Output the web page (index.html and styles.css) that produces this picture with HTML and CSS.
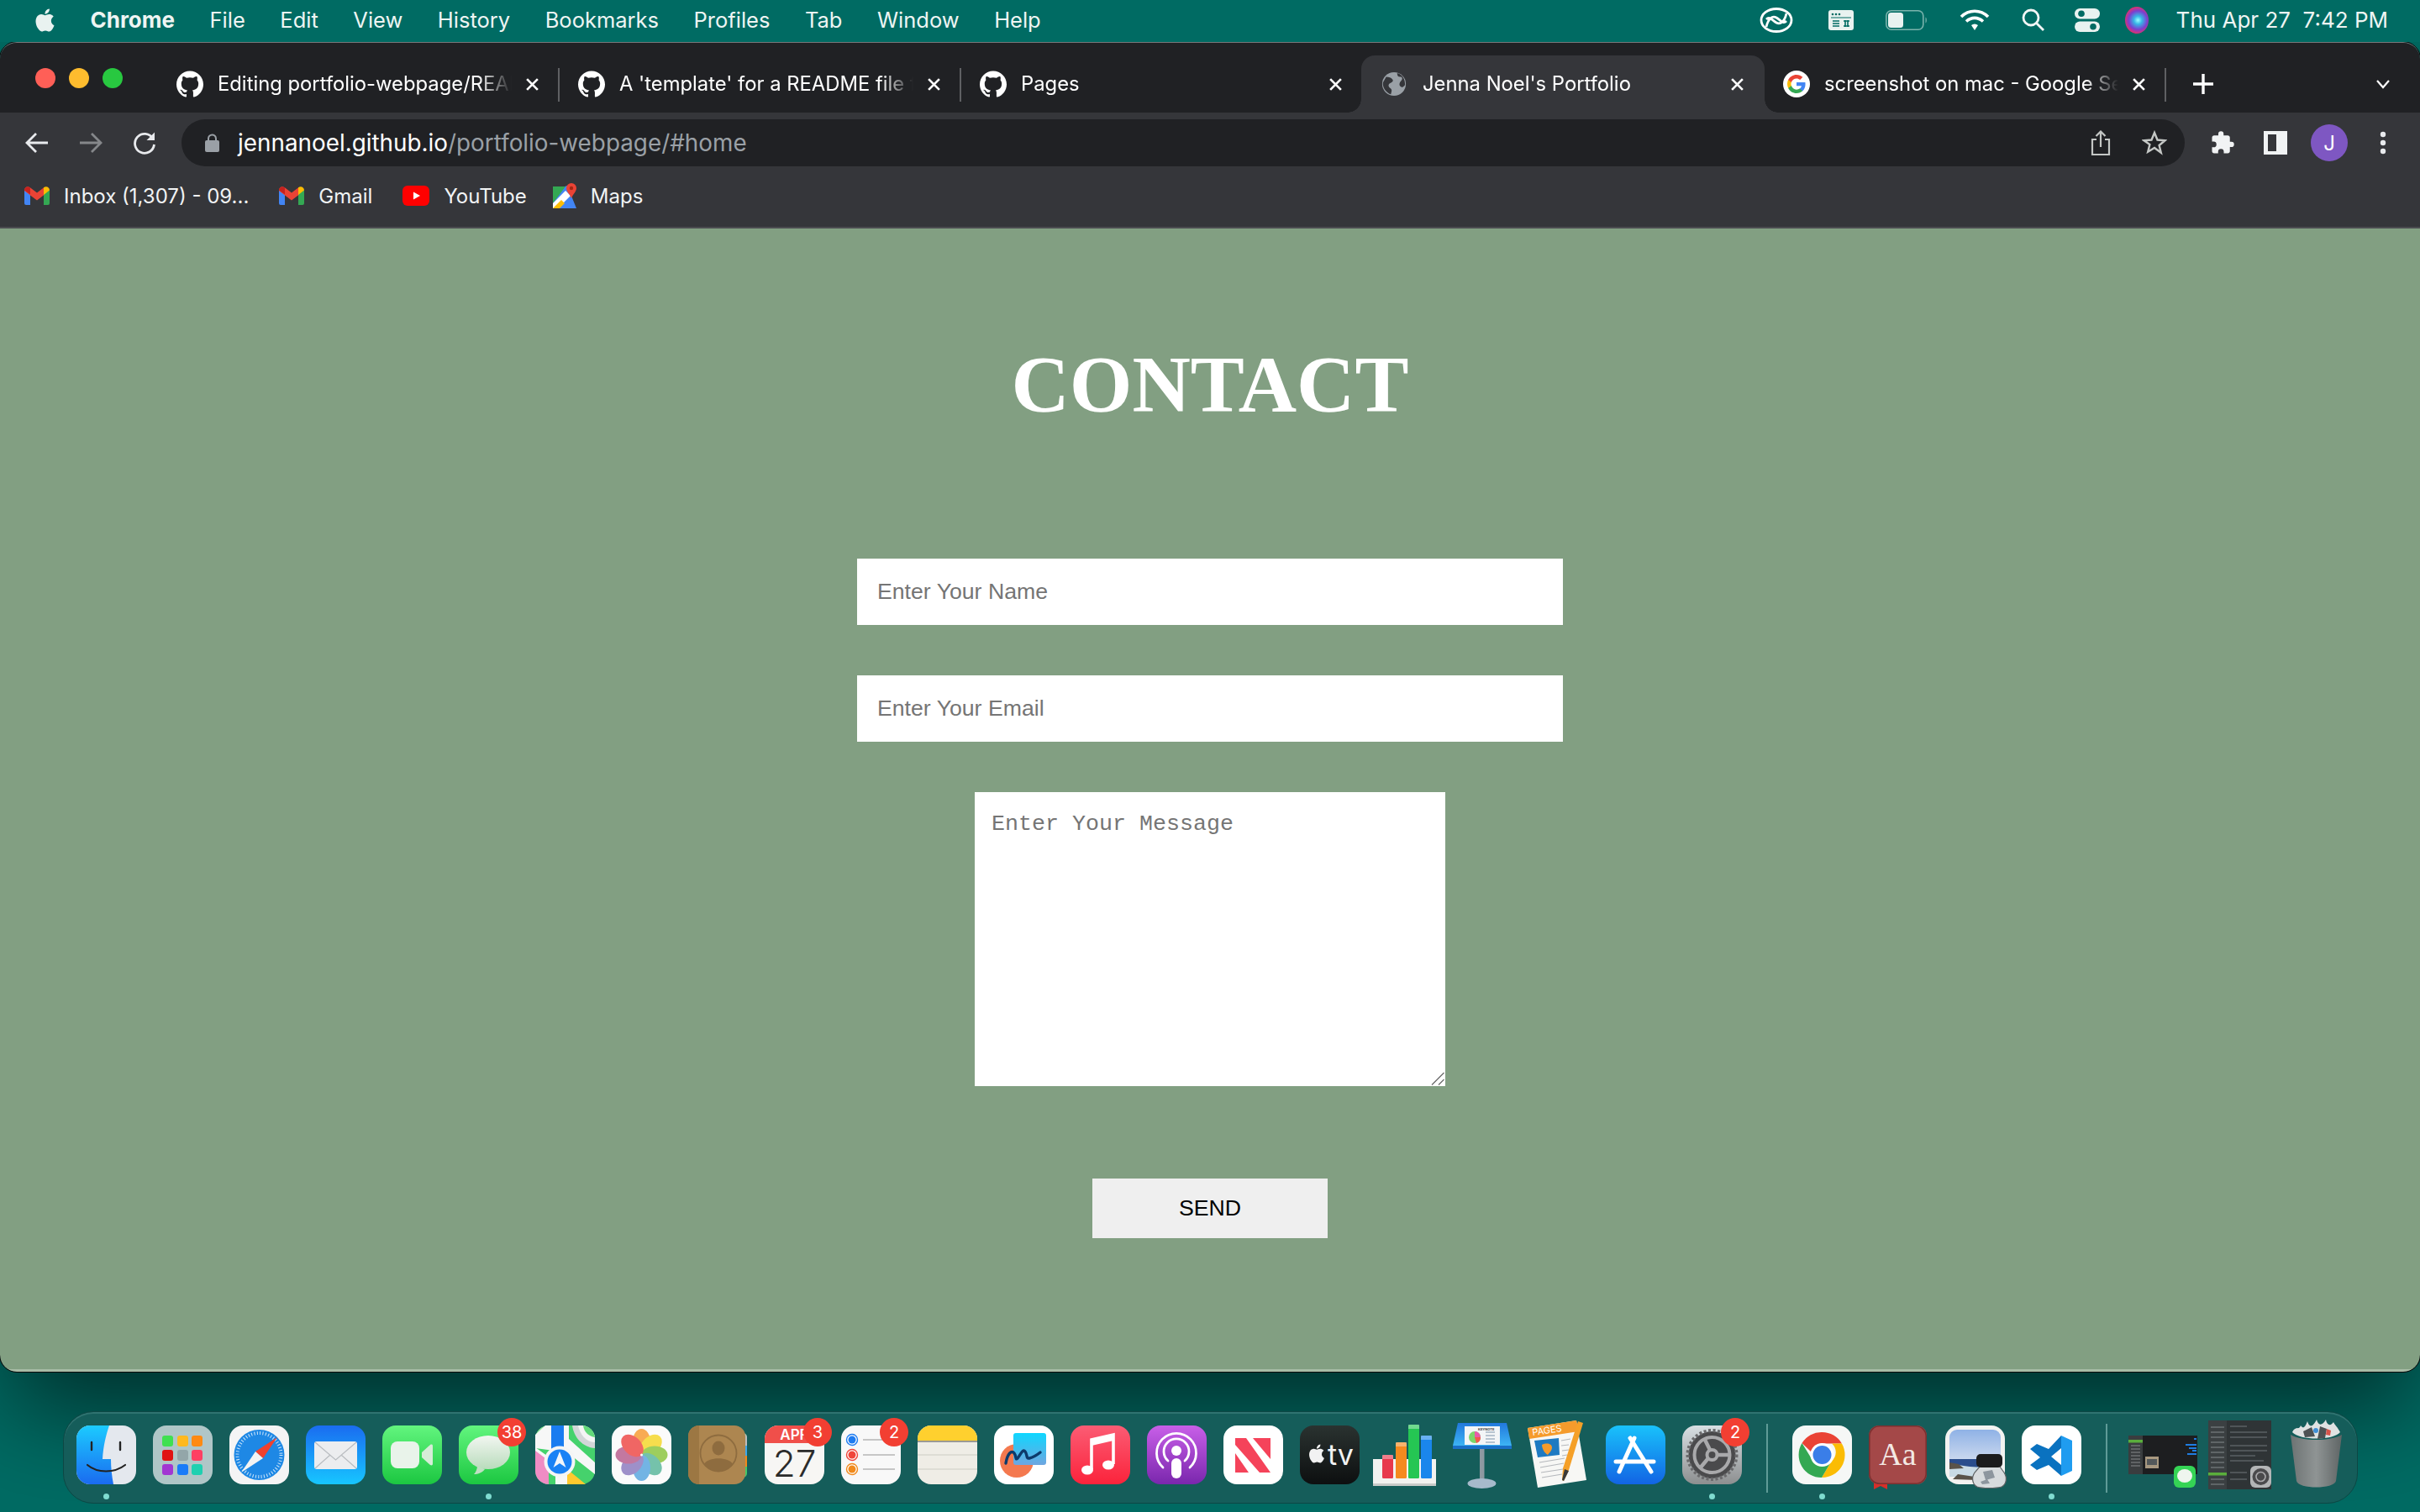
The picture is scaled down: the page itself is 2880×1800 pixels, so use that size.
FILE: index.html
```html
<!DOCTYPE html>
<html lang="en">
<head>
    <meta charset="UTF-8">
    <title>Jenna Noel's Portfolio</title>
    <link rel="stylesheet" href="styles.css">
</head>

<body>

    <!-- Shared icons and gradients -->
    <svg class="svg-defs" aria-hidden="true">
        <defs>
            <linearGradient id="g-mail" x1="0" y1="0" x2="0" y2="1"><stop offset="0" stop-color="#1a6cf0"/><stop offset="1" stop-color="#17c6ff"/></linearGradient>
            <linearGradient id="g-green" x1="0" y1="0" x2="0" y2="1"><stop offset="0" stop-color="#62f57e"/><stop offset="1" stop-color="#1cc741"/></linearGradient>
            <linearGradient id="g-bubble" x1="0" y1="0" x2="0" y2="1"><stop offset="0" stop-color="#f2f6f1"/><stop offset="1" stop-color="#b9dcbc"/></linearGradient>
            <linearGradient id="g-music" x1="0" y1="0" x2="0" y2="1"><stop offset="0" stop-color="#fb5c74"/><stop offset="1" stop-color="#fb233b"/></linearGradient>
            <linearGradient id="g-pod" x1="0" y1="0" x2="0" y2="1"><stop offset="0" stop-color="#c85fe8"/><stop offset="1" stop-color="#7a27ad"/></linearGradient>
            <linearGradient id="g-tv" x1="0" y1="0" x2="0" y2="1"><stop offset="0" stop-color="#2a3230"/><stop offset="1" stop-color="#0d0f10"/></linearGradient>
            <linearGradient id="g-store" x1="0" y1="0" x2="0" y2="1"><stop offset="0" stop-color="#19c2fb"/><stop offset="1" stop-color="#1264e4"/></linearGradient>
            <linearGradient id="g-gear" x1="0" y1="0" x2="0" y2="1"><stop offset="0" stop-color="#d8dfe3"/><stop offset="1" stop-color="#8d8f90"/></linearGradient>
            <linearGradient id="g-finder" x1="0" y1="0" x2="0" y2="1"><stop offset="0" stop-color="#1ccbff"/><stop offset="1" stop-color="#1a6bf0"/></linearGradient>
            <linearGradient id="g-trash" x1="0" y1="0" x2="1" y2="0"><stop offset="0" stop-color="#6d7373"/><stop offset=".5" stop-color="#8f9494"/><stop offset="1" stop-color="#5f6565"/></linearGradient>
            <linearGradient id="g-sheet" x1="0" y1="0" x2="0" y2="1"><stop offset="0" stop-color="#0fd7ff"/><stop offset="1" stop-color="#6fa6e0"/></linearGradient>
            <linearGradient id="g-sky" x1="0" y1="0" x2="0" y2="1"><stop offset="0" stop-color="#8fb2e6"/><stop offset="1" stop-color="#c9d7ee"/></linearGradient>
            <linearGradient id="g-stage" x1="0" y1="0" x2="0" y2="1"><stop offset="0" stop-color="#2278dc"/><stop offset="1" stop-color="#3db4f5"/></linearGradient>

            <symbol id="i-apple" viewBox="0 0 24 24"><path d="M12.152 6.896c-.948 0-2.415-1.078-3.96-1.04-2.04.027-3.91 1.183-4.961 3.014-2.117 3.675-.546 9.103 1.519 12.09 1.013 1.454 2.208 3.09 3.792 3.039 1.52-.065 2.09-.987 3.935-.987 1.831 0 2.35.987 3.96.948 1.637-.026 2.676-1.48 3.676-2.948 1.156-1.688 1.636-3.325 1.662-3.415-.039-.013-3.182-1.221-3.22-4.857-.026-3.04 2.48-4.494 2.597-4.559-1.429-2.09-3.623-2.324-4.39-2.376-2-.156-3.675 1.09-4.61 1.09zM15.53 3.83c.843-1.012 1.4-2.427 1.245-3.83-1.207.052-2.662.805-3.532 1.818-.78.896-1.454 2.338-1.273 3.714 1.338.104 2.715-.688 3.559-1.701"/></symbol>
            <symbol id="i-github" viewBox="0 0 24 24"><path fill="#fff" d="M12 .297c-6.63 0-12 5.373-12 12 0 5.303 3.438 9.8 8.205 11.385.6.113.82-.258.82-.577 0-.285-.01-1.04-.015-2.04-3.338.724-4.042-1.61-4.042-1.61C4.422 18.07 3.633 17.7 3.633 17.7c-1.087-.744.084-.729.084-.729 1.205.084 1.838 1.236 1.838 1.236 1.07 1.835 2.809 1.305 3.495.998.108-.776.417-1.305.76-1.605-2.665-.3-5.466-1.332-5.466-5.93 0-1.31.465-2.38 1.235-3.22-.135-.303-.54-1.523.105-3.176 0 0 1.005-.322 3.3 1.23.96-.267 1.98-.399 3-.405 1.02.006 2.04.138 3 .405 2.28-1.552 3.285-1.23 3.285-1.23.645 1.653.24 2.873.12 3.176.765.84 1.23 1.91 1.23 3.22 0 4.61-2.805 5.625-5.475 5.92.42.36.81 1.096.81 2.22 0 1.606-.015 2.896-.03 3.286 0 .315.21.69.825.57C20.565 22.092 24 17.592 24 12.297c0-6.627-5.373-12-12-12"/></symbol>
            <symbol id="i-gmail" viewBox="0 0 30 22">
                <path fill="#4285f4" d="M0 4v16a2 2 0 0 0 2 2h5V9z"/>
                <path fill="#34a853" d="M30 4v16a2 2 0 0 1-2 2h-5V9z"/>
                <path fill="#ea4335" d="M0 4.500C0 1 3.500-1 6.500 1L15 7.500 23.500 1v9L15 16.500 7 10.500 0 5z"/>
                <path fill="#fbbc04" d="M23 1.300C26-1 30 1 30 4.500L23 10z"/>
                <path fill="#c5221f" d="M0 4.500 7 9.500V1.600C4-1 0 1 0 4.500z"/>
            </symbol>
            <symbol id="i-close" viewBox="0 0 16 16"><path d="M2 2l12 12M14 2 2 14" stroke="#fff" stroke-width="2.500" fill="none"/></symbol>
        </defs>
    </svg>

    <!-- Menu bar -->
    <header class="menu-bar">
        <nav class="menu-left">
            <svg class="apple-logo"><use href="#i-apple" fill="#e9f2f0"/></svg>
            <span class="menu-app">Chrome</span>
            <span>File</span>
            <span>Edit</span>
            <span>View</span>
            <span>History</span>
            <span>Bookmarks</span>
            <span>Profiles</span>
            <span>Tab</span>
            <span>Window</span>
            <span>Help</span>
        </nav>
        <div class="menu-right">
            <svg class="status-icon" width="40" height="30" viewBox="0 0 40 30" fill="none" stroke="#fff" stroke-width="2.800">
                <ellipse cx="20" cy="15" rx="18" ry="13.500"/>
                <path d="M8 23c2-9 7-14 12-11s8 8 12 4M32 7c-2 9-7 14-12 11S12 10 8 14"/>
            </svg>
            <svg class="status-icon status-input" width="30" height="24" viewBox="0 0 30 24">
                <rect width="30" height="24" rx="3" fill="#e9f2f0"/>
                <path d="M3 9h24" stroke="#006b63" stroke-width="1"/>
                <path d="M5 13h8M5 16h8M5 19h8M18 13h7M18 19h7M20 12v8M23 12v8" stroke="#006b63" stroke-width="1.600"/>
                <circle cx="5" cy="5" r="1.300" fill="#006b63"/><circle cx="9" cy="5" r="1.300" fill="#006b63"/><circle cx="13" cy="5" r="1.300" fill="#006b63"/>
            </svg>
            <svg class="status-icon" width="50" height="24" viewBox="0 0 50 24">
                <rect x=".8" y=".8" width="44" height="22.400" rx="6" fill="none" stroke="#7ab3ac" stroke-width="1.600"/>
                <rect x="3" y="3" width="18" height="18" rx="3.500" fill="#e9f2f0"/>
                <path d="M47.500 8.500c1.800.8 1.800 6.200 0 7z" fill="#7ab3ac"/>
            </svg>
            <svg class="status-icon" width="36" height="26" viewBox="0 0 36 26" fill="none" stroke="#fff" stroke-width="3.600">
                <path d="M2 9c9-9 23-9 32 0M8 14.500c6-5.500 14-5.500 20 0"/>
                <path d="M14 19c2.500-2 5.500-2 8 0l-4 6z" fill="#fff" stroke="none"/>
            </svg>
            <svg class="status-icon" width="28" height="28" viewBox="0 0 28 28" fill="none" stroke="#f1f6f5" stroke-width="2.800">
                <circle cx="11" cy="11" r="9"/><path d="M17.500 17.500 26 26"/>
            </svg>
            <svg class="status-icon status-control" width="30" height="28" viewBox="0 0 30 28">
                <rect width="30" height="12.500" rx="6.250" fill="#e9f2f0"/>
                <circle cx="8" cy="6.250" r="3.800" fill="#006b63"/>
                <rect y="15.500" width="30" height="12.500" rx="6.250" fill="#e9f2f0"/>
                <circle cx="22" cy="21.750" r="3.800" fill="#006b63"/>
            </svg>
            <span class="siri"></span>
            <span class="menu-clock">Thu Apr 27&nbsp; 7:42 PM</span>
        </div>
    </header>

    <!-- Browser window -->
    <div class="window">
        <div class="tab-strip">
            <div class="traffic-lights">
                <span class="light light-red"></span>
                <span class="light light-yellow"></span>
                <span class="light light-green"></span>
            </div>
            <div class="tab tab-sep">
                <svg class="favicon"><use href="#i-github"/></svg>
                <span class="tab-title">Editing portfolio-webpage/README.md</span>
                <svg class="tab-close"><use href="#i-close"/></svg>
            </div>
            <div class="tab tab-sep">
                <svg class="favicon"><use href="#i-github"/></svg>
                <span class="tab-title">A 'template' for a README file for</span>
                <svg class="tab-close"><use href="#i-close"/></svg>
            </div>
            <div class="tab">
                <svg class="favicon"><use href="#i-github"/></svg>
                <span class="tab-title">Pages</span>
                <svg class="tab-close"><use href="#i-close"/></svg>
            </div>
            <div class="tab tab-active">
                <svg class="favicon" viewBox="0 0 32 32">
                    <circle cx="16" cy="16" r="15" fill="#9aa0a6"/>
                    <path d="M6 7c4 0 6 1 8 3s-1 4-3 5-3 4 0 6 2 4 1 8C6 27 1 20 2 14zM20 2c0 3 1 5 4 5s3 3 1 5-3 5-1 7 4 1 6-2c0-7-3-13-10-15z" fill="#35363a"/>
                </svg>
                <span class="tab-title">Jenna Noel's Portfolio</span>
                <svg class="tab-close"><use href="#i-close"/></svg>
            </div>
            <div class="tab tab-sep">
                <svg class="favicon" viewBox="0 0 32 32">
                    <circle cx="16" cy="16" r="16" fill="#fff"/>
                    <g transform="translate(4 4)">
                        <path fill="#4285f4" d="M22.560 12.250c0-.78-.07-1.530-.2-2.250H12v4.260h5.920c-.26 1.370-1.040 2.530-2.210 3.310v2.770h3.570c2.080-1.920 3.280-4.740 3.280-8.090z"/>
                        <path fill="#34a853" d="M12 23c2.970 0 5.460-.98 7.280-2.660l-3.570-2.770c-.98.66-2.230 1.060-3.710 1.060-2.860 0-5.290-1.930-6.160-4.530H2.180v2.840C3.990 20.530 7.700 23 12 23z"/>
                        <path fill="#fbbc05" d="M5.840 14.090c-.22-.66-.35-1.360-.35-2.090s.13-1.430.35-2.090V7.070H2.180C1.430 8.550 1 10.220 1 12s.43 3.450 1.180 4.930l2.850-2.220.81-.62z"/>
                        <path fill="#ea4335" d="M12 5.380c1.620 0 3.060.56 4.210 1.640l3.150-3.150C17.450 2.090 14.970 1 12 1 7.700 1 3.990 3.470 2.180 7.070l3.660 2.840c.87-2.600 3.300-4.530 6.160-4.530z"/>
                    </g>
                </svg>
                <span class="tab-title">screenshot on mac - Google Search</span>
                <svg class="tab-close"><use href="#i-close"/></svg>
            </div>
            <svg class="new-tab" width="26" height="26" viewBox="0 0 26 26"><path d="M13 1v24M1 13h24" stroke="#fff" stroke-width="3.400"/></svg>
            <svg class="tab-menu" width="18" height="12" viewBox="0 0 18 12"><path d="M2 2l7 8 7-8" fill="none" stroke="#fff" stroke-width="2.200"/></svg>
        </div>

        <div class="toolbar">
            <svg class="nav-icon" width="28" height="26" viewBox="0 0 28 26" fill="none" stroke="#e8eaed" stroke-width="2.800"><path d="M27 13H3M13 2 2 13l11 11"/></svg>
            <svg class="nav-icon" width="28" height="26" viewBox="0 0 28 26" fill="none" stroke="#85878a" stroke-width="2.800"><path d="M1 13h24M15 2l11 11-11 11"/></svg>
            <svg class="nav-icon" width="28" height="28" viewBox="0 0 28 28" fill="none" stroke="#e8eaed" stroke-width="2.800"><path d="M24 9A11.500 11.500 0 1 0 25.500 16"/><path d="M26 1.500V11H16.500z" fill="#e8eaed" stroke="none"/></svg>
            <div class="omnibox">
                <svg class="lock" width="17" height="22" viewBox="0 0 17 22"><path d="M4 9V6a4.500 4.500 0 0 1 9 0v3" fill="none" stroke="#9aa0a6" stroke-width="2"/><rect y="8" width="17" height="14" rx="2" fill="#9aa0a6"/></svg>
                <span class="url"><span class="url-host">jennanoel.github.io</span>/portfolio-webpage/#home</span>
                <svg class="omni-icon" width="24" height="30" viewBox="0 0 24 30" fill="none" stroke="#c4c7c5" stroke-width="2.200"><path d="M7 11H2v18h20V11h-5M12 20V2M6.500 7 12 1.500 17.500 7"/></svg>
                <svg class="omni-icon" width="30" height="30" viewBox="0 0 30 30" fill="none" stroke="#c4c7c5" stroke-width="2.400"><path d="M15 3l3.500 8.500 9 .7-6.900 5.800 2.200 8.800L15 21l-7.800 4.800 2.200-8.800L2.500 12.200l9-.7z"/></svg>
            </div>
            <div class="toolbar-actions">
                <svg width="30" height="30" viewBox="0 0 24 24"><path fill="#f1f3f4" d="M20.500 11H19V7c0-1.100-.9-2-2-2h-4V3.500a2.500 2.500 0 0 0-5 0V5H4c-1.100 0-2 .9-2 2v3.800h1.500a2.700 2.700 0 0 1 0 5.400H2V20c0 1.100.9 2 2 2h3.800v-1.500a2.700 2.700 0 0 1 5.400 0V22H17c1.100 0 2-.9 2-2v-4h1.500a2.500 2.500 0 0 0 0-5z"/></svg>
                <svg width="28" height="28" viewBox="0 0 28 28"><rect width="28" height="28" fill="#f1f3f4"/><rect x="5" y="4" width="10" height="20" fill="#35363a"/></svg>
                <span class="avatar">J</span>
                <svg width="8" height="28" viewBox="0 0 8 28" fill="#e8eaed"><circle cx="4" cy="4" r="3.200"/><circle cx="4" cy="14" r="3.200"/><circle cx="4" cy="24" r="3.200"/></svg>
            </div>
        </div>

        <div class="bookmarks">
            <div class="bookmark">
                <svg width="30" height="22"><use href="#i-gmail"/></svg>
                <span>Inbox (1,307) - 09...</span>
            </div>
            <div class="bookmark">
                <svg width="30" height="22"><use href="#i-gmail"/></svg>
                <span>Gmail</span>
            </div>
            <div class="bookmark">
                <svg width="32" height="24" viewBox="0 0 32 24"><rect width="32" height="24" rx="6" fill="#f00"/><path d="M13 7.500 21 12l-8 4.500z" fill="#fff"/></svg>
                <span>YouTube</span>
            </div>
            <div class="bookmark">
                <svg width="28" height="30" viewBox="0 0 28 30">
                    <path d="M0 9 17 3l11 27H0z" fill="#4285f4"/>
                    <path d="M0 4h15L0 24z" fill="#34a853"/>
                    <path d="M0 24 15 9l6 6L6 30H0z" fill="#fff"/>
                    <path d="M0 30 10 20l4 4-6 6z" fill="#fbbc04"/>
                    <path d="M22 0a6 6 0 0 1 6 6c0 4-4 7-6 12-2-5-6-8-6-12a6 6 0 0 1 6-6z" fill="#ea4335"/>
                    <circle cx="22" cy="6" r="2.200" fill="#a52714"/>
                </svg>
                <span>Maps</span>
            </div>
        </div>

        <!-- Contact section of the page -->
        <main class="page">
            <h1>CONTACT</h1>
            <form class="contact-form">
                <input type="text" placeholder="Enter Your Name">
                <input type="email" placeholder="Enter Your Email">
                <div class="message-box">
                    <textarea placeholder="Enter Your Message"></textarea>
                    <svg class="resize-grip" width="16" height="16" viewBox="0 0 16 16" fill="none" stroke="#6b6b6b" stroke-width="1.300"><path d="M1 15.500 15.500 1M9 15.500l6.500-6.500"/></svg>
                </div>
                <button type="button">SEND</button>
            </form>
        </main>
    </div>

    <!-- Dock -->
    <footer class="dock">
        <div class="dock-item has-dot">
            <svg viewBox="0 0 71 70">
                <rect width="71" height="70" rx="16" fill="#e4e8ee"/>
                <path d="M16 0h23c-4 12-7 24-8 40h10c0 10 1 20 3 30H16A16 16 0 0 1 0 54V16A16 16 0 0 1 16 0z" fill="url(#g-finder)"/>
                <path d="M18 20v9M52 20v9" stroke="#222" stroke-width="2.400" stroke-linecap="round"/>
                <path d="M13 47c12 10 32 10 45 0" stroke="#222" stroke-width="2.200" fill="none" stroke-linecap="round"/>
            </svg>
        </div>
        <div class="dock-item">
            <svg viewBox="0 0 71 70">
                <rect width="71" height="70" rx="16" fill="#b0c6c7"/>
                <rect x="11" y="12" width="13" height="13" rx="3" fill="#3fe050"/><rect x="29" y="12" width="13" height="13" rx="3" fill="#ffb91f"/><rect x="46" y="12" width="13" height="13" rx="3" fill="#ff8a12"/>
                <rect x="11" y="29" width="13" height="13" rx="3" fill="#e01212"/><rect x="29" y="29" width="13" height="13" rx="3" fill="#93a6a9"/><rect x="46" y="29" width="13" height="13" rx="3" fill="#ff3f63"/>
                <rect x="11" y="46" width="13" height="13" rx="3" fill="#a236d2"/><rect x="29" y="46" width="13" height="13" rx="3" fill="#1a7cf8"/><rect x="46" y="46" width="13" height="13" rx="3" fill="#1fd0b0"/>
            </svg>
        </div>
        <div class="dock-item">
            <svg viewBox="0 0 71 70">
                <rect width="71" height="70" rx="16" fill="#f4f4f5"/>
                <circle cx="35.500" cy="35" r="30" fill="#1e88e5"/>
                <circle cx="35.500" cy="35" r="26" fill="none" stroke="#cfe6fa" stroke-width="4" stroke-dasharray="1 2.400"/>
                <path d="M57 14 31 31l9 8z" fill="#f0412f"/>
                <path d="M14 56 31 31l9 8z" fill="#f3f3f3"/>
            </svg>
        </div>
        <div class="dock-item">
            <svg viewBox="0 0 71 70">
                <rect width="71" height="70" rx="16" fill="url(#g-mail)"/>
                <rect x="10" y="19" width="51" height="33" rx="3" fill="#ecedef"/>
                <path d="M11 20l24.500 21L60 20M11 51l18-16M60 51 42 35" fill="none" stroke="#b9bcc0" stroke-width="1.200"/>
            </svg>
        </div>
        <div class="dock-item">
            <svg viewBox="0 0 71 70">
                <rect width="71" height="70" rx="16" fill="url(#g-green)"/>
                <rect x="10" y="19" width="34" height="32" rx="8" fill="#e9f3ea"/>
                <path d="M47 32l10-9c1.500-1 3-.5 3 1.500v21c0 2-1.500 2.500-3 1.500l-10-9z" fill="#d6ecd8"/>
            </svg>
        </div>
        <div class="dock-item has-dot">
            <svg viewBox="0 0 71 70">
                <rect width="71" height="70" rx="16" fill="url(#g-green)"/>
                <ellipse cx="35" cy="32" rx="26" ry="20" fill="url(#g-bubble)"/>
                <path d="M22 48c0 4-2 8-4 10 5 0 10-2 13-6z" fill="#bfdfc2"/>
            </svg>
            <span class="dock-badge">38</span>
        </div>
        <div class="dock-item">
            <svg viewBox="0 0 71 70">
                <rect width="71" height="70" rx="16" fill="#45d26c"/>
                <path d="M16 0h3L0 16A16 16 0 0 1 16 0z" fill="#8fe39a"/>
                <path d="M0 26 14 36 28 50 42 62 50 70H24V50L0 34z" fill="#f7f7f7"/>
                <path d="M0 11 12 0h28v16L71 44v14L38 32 0 27z" fill="#f7f7f7"/>
                <path d="M0 30 16 42v28H16A16 16 0 0 1 0 54z" fill="#ef8cc4"/>
                <path d="M38 70V52l22 18z" fill="#ffc92e"/>
                <rect x="19" y="0" width="15" height="30" fill="#1a7cf0"/>
                <path d="M44 0h11a16 16 0 0 1 16 16v11C56 26 46 14 44 0z" fill="#d3d6d8"/>
                <path d="M51 0h4a16 16 0 0 1 16 16v4C60 20 53 10 51 0z" fill="#f4f4f4"/>
                <path d="M57 0a16 16 0 0 1 14 14C64 13 58 8 57 0z" fill="#62d97a"/>
                <circle cx="29" cy="43" r="18.500" fill="#f5f5f5"/>
                <circle cx="29" cy="43" r="14.500" fill="#1a82f5"/>
                <path d="M29 31l7.500 19-7.500-5-7.500 5z" fill="#f2f6fb"/>
            </svg>
        </div>
        <div class="dock-item">
            <svg viewBox="0 0 71 70">
                <rect width="71" height="70" rx="16" fill="#fbfbfb"/>
                <g transform="translate(35.500 35)" opacity=".84">
                    <ellipse cx="0" cy="-15.500" rx="10.500" ry="15.500" fill="#f89c35"/>
                    <ellipse cx="0" cy="-15.500" rx="10.500" ry="15.500" fill="#f6d82c" transform="rotate(45)"/>
                    <ellipse cx="0" cy="-15.500" rx="10.500" ry="15.500" fill="#8cc63f" transform="rotate(90)"/>
                    <ellipse cx="0" cy="-15.500" rx="10.500" ry="15.500" fill="#5cb89c" transform="rotate(135)"/>
                    <ellipse cx="0" cy="-15.500" rx="10.500" ry="15.500" fill="#5aa7e0" transform="rotate(180)"/>
                    <ellipse cx="0" cy="-15.500" rx="10.500" ry="15.500" fill="#8d7cc0" transform="rotate(225)"/>
                    <ellipse cx="0" cy="-15.500" rx="10.500" ry="15.500" fill="#b9608f" transform="rotate(270)"/>
                    <ellipse cx="0" cy="-15.500" rx="10.500" ry="15.500" fill="#ef4a48" transform="rotate(315)"/>
                </g>
                <circle cx="35.500" cy="35" r="1.500" fill="#fff"/>
            </svg>
        </div>
        <div class="dock-item">
            <svg viewBox="0 0 71 70">
                <path d="M60 9h5a5 5 0 0 1 5 5v43a5 5 0 0 1-5 5h-5z" fill="#46c868"/>
                <path d="M60 9h5a5 5 0 0 1 5 5v10H60z" fill="#bdbdbd"/><path d="M60 24h10v12H60z" fill="#3fa8ea"/><path d="M60 36h10v13H60z" fill="#f08a1c"/>
                <rect width="68" height="70" rx="13" fill="#ad8650"/>
                <path d="M13 0A13 13 0 0 0 0 13v44a13 13 0 0 0 13 13V0z" fill="#9c7743"/>
                <circle cx="36" cy="33" r="21.500" fill="none" stroke="#8e6c3f" stroke-width="1.800"/>
                <ellipse cx="36" cy="27" rx="7.500" ry="8.500" fill="#8e6c3f"/>
                <path d="M19 46c4-9 30-9 34 0-8 11-26 11-34 0z" fill="#8e6c3f"/>
            </svg>
        </div>
        <div class="dock-item">
            <svg viewBox="0 0 71 70">
                <rect width="71" height="70" rx="16" fill="#f7f6f4"/>
                <path d="M16 0h39a16 16 0 0 1 16 16v5H0v-5A16 16 0 0 1 16 0z" fill="#f04f4a"/>
                <text x="35.500" y="17" class="cal-month">APR</text>
                <text x="35.500" y="61" class="cal-day">27</text>
            </svg>
            <span class="dock-badge">3</span>
        </div>
        <div class="dock-item">
            <svg viewBox="0 0 71 70">
                <rect width="71" height="70" rx="16" fill="#f8f8f8"/>
                <circle cx="13" cy="17" r="6.500" fill="#fff" stroke="#1f7cf0" stroke-width="1.400"/><circle cx="13" cy="17" r="4.500" fill="#1f7cf0"/>
                <circle cx="13" cy="35" r="6.500" fill="#fff" stroke="#f0453a" stroke-width="1.400"/><circle cx="13" cy="35" r="4.500" fill="#f0453a"/>
                <circle cx="13" cy="52" r="6.500" fill="#fff" stroke="#f08a1c" stroke-width="1.400"/><circle cx="13" cy="52" r="4.500" fill="#f08a1c"/>
                <path d="M26 17h38M26 35h38M26 52h38" stroke="#b5b5b5" stroke-width="1.600"/>
            </svg>
            <span class="dock-badge">2</span>
        </div>
        <div class="dock-item">
            <svg viewBox="0 0 71 70">
                <rect width="71" height="70" rx="16" fill="#efede6"/>
                <path d="M16 0h39a16 16 0 0 1 16 16v3H0v-3A16 16 0 0 1 16 0z" fill="#ffd02e"/>
                <path d="M0 19h71" stroke="#9c9a94" stroke-width="2"/>
                <path d="M0 35h71M0 52h71" stroke="#d9d7d0" stroke-width="1.400"/>
            </svg>
        </div>
        <div class="dock-item">
            <svg viewBox="0 0 71 70">
                <rect width="71" height="70" rx="16" fill="#fff"/>
                <circle cx="27" cy="42" r="20" fill="#f4794f"/>
                <rect x="23" y="9" width="39" height="38" rx="3" fill="url(#g-sheet)"/>
                <path d="M14 45c2-12 7-16 10-12s1 9 4 6 6-12 9-8 1 9 5 8 8-3 13-7" fill="none" stroke="#0d3a6b" stroke-width="3.400" stroke-linecap="round"/>
            </svg>
        </div>
        <div class="dock-item">
            <svg viewBox="0 0 71 70">
                <rect width="71" height="70" rx="16" fill="url(#g-music)"/>
                <path d="M25 52V17L51 11V46" fill="none" stroke="#fff" stroke-width="3.600"/>
                <path d="M25 18 51 12v6l-26 6z" fill="#fff"/>
                <ellipse cx="20" cy="53" rx="7" ry="5.500" fill="#fff"/>
                <ellipse cx="45" cy="47" rx="7" ry="5.500" fill="#fff"/>
            </svg>
        </div>
        <div class="dock-item">
            <svg viewBox="0 0 71 70">
                <rect width="71" height="70" rx="16" fill="url(#g-pod)"/>
                <path d="M19 50a23.500 23.500 0 1 1 32 0M25 42a15 15 0 1 1 20 0" fill="none" stroke="#fff" stroke-width="2.800" stroke-linecap="round"/>
                <circle cx="35" cy="30" r="6" fill="#fff"/>
                <rect x="29" y="39" width="12" height="24" rx="6" fill="#fff"/>
            </svg>
        </div>
        <div class="dock-item">
            <svg viewBox="0 0 71 70">
                <rect width="71" height="70" rx="16" fill="#fff"/>
                <path d="M14 15h13l29 41H43L14 23zM14 33l16 23H14zM35 15h21v25z" fill="#f5435a"/>
            </svg>
        </div>
        <div class="dock-item">
            <svg viewBox="0 0 71 70">
                <rect width="71" height="70" rx="16" fill="url(#g-tv)"/>
                <use href="#i-apple" x="9" y="20" width="22" height="27" fill="#f2f2f2"/>
                <text x="33" y="47" class="tv-label">tv</text>
            </svg>
        </div>
        <div class="dock-item">
            <svg class="icon-numbers" viewBox="0 0 76 78">
                <rect x="0" y="46" width="75" height="31" fill="#f2f2f0"/>
                <rect x="0" y="75" width="75" height="3" fill="#c9cbc9"/>
                <rect x="11" y="41" width="13" height="28" rx="1.500" fill="#e8384c"/>
                <rect x="27" y="26" width="13" height="43" rx="1.500" fill="#f58a1f"/>
                <rect x="42" y="5" width="13" height="64" rx="1.500" fill="#25c653"/>
                <rect x="57" y="18" width="13" height="51" rx="1.500" fill="#1a86ec"/>
                <path d="M11 41h13v5H11zM27 26h13v5H27zM42 5h13v5H42zM57 18h13v5H57z" fill="#fff" opacity=".35"/>
            </svg>
        </div>
        <div class="dock-item">
            <svg class="icon-keynote" viewBox="0 0 71 80">
                <path d="M6 0h58l6 27H0z" fill="url(#g-stage)"/>
                <rect x="0" y="27" width="70" height="4" fill="#1a6fc8"/>
                <rect x="14" y="4" width="42" height="22" fill="#f3f5f7"/>
                <text x="30" y="9" class="kn-label">KEYNOTE</text>
                <circle cx="26" cy="17" r="7" fill="#7ad66a"/>
                <path d="M26 17v-7a7 7 0 0 1 7 7z" fill="#e85aa8"/>
                <path d="M26 17h7a7 7 0 0 1-5 7z" fill="#f0594a"/>
                <path d="M39 11h11M39 15h11M39 19h11M39 23h11" stroke="#a4b4c4" stroke-width="1.400"/>
                <rect x="32" y="31" width="5.500" height="42" fill="#8e99a1"/>
                <ellipse cx="34.500" cy="72" rx="17" ry="6" fill="#a7bacb"/>
            </svg>
        </div>
        <div class="dock-item">
            <svg class="icon-pages" viewBox="0 0 71 80">
                <path d="M0 9 58 0l12 71-58 9z" fill="#f7f7f5"/>
                <path d="M0 9 58 0l3 13-59 9z" fill="#f59b2c"/>
                <text x="6" y="18" class="pg-label" transform="rotate(-8 6 18)">PAGES</text>
                <path d="M8 24 37 21l1 20-26 3z" fill="#1e7ac2"/>
                <path d="M17 29c6-3 12-1 12 3s-3 6-5 9c-4-2-7-8-7-12z" fill="#f59b2c"/>
                <path d="M40 24l11-2M40 30l9-1M41 36l8-1M41 42l6-1M14 50l30-5M15 56l28-5M16 62l26-4M17 68l24-4" stroke="#b5b8bc" stroke-width="1.200"/>
                <path d="M60 1l6 2-17 56-6 13-2-1 1-14z" fill="#f5a028"/>
                <path d="M44 58l5 2-6 12-2-1z" fill="#3a3a3a"/>
            </svg>
        </div>
        <div class="dock-item">
            <svg viewBox="0 0 71 70">
                <rect width="71" height="70" rx="16" fill="url(#g-store)"/>
                <path d="M34 15 16 55M29 15l25 40M12 43h45" stroke="#fff" stroke-width="5" stroke-linecap="round" fill="none"/>
            </svg>
        </div>
        <div class="dock-item has-dot">
            <svg viewBox="0 0 71 70">
                <rect width="71" height="70" rx="16" fill="url(#g-gear)"/>
                <circle cx="35.500" cy="35" r="28" fill="#4a4a4c"/>
                <circle cx="35.500" cy="35" r="29" fill="none" stroke="#6a6a6c" stroke-width="4" stroke-dasharray="3 2.500"/>
                <circle cx="35.500" cy="35" r="21" fill="none" stroke="#a9a9ab" stroke-width="4"/>
                <circle cx="35.500" cy="35" r="6" fill="none" stroke="#a9a9ab" stroke-width="4"/>
                <path d="M33 29 26 15M41.500 35H56M31 39 21 51" stroke="#a9a9ab" stroke-width="4.500"/>
            </svg>
            <span class="dock-badge">2</span>
        </div>
        <div class="dock-separator"></div>
        <div class="dock-item has-dot">
            <svg viewBox="0 0 71 70">
                <rect width="71" height="70" rx="16" fill="#f5f7f6"/>
                <path d="M35.500 8a27 27 0 0 1 23.400 13.500H35.500a13.500 13.500 0 0 0-13 10L11.500 21A27 27 0 0 1 35.500 8z" fill="#ea4335"/>
                <path d="M58.900 21.500A27 27 0 0 1 35 62l11.500-19.500A13.500 13.500 0 0 0 47 21.500z" fill="#fbbc04"/>
                <path d="M35 62A27 27 0 0 1 11.500 21l12 19.500a13.500 13.500 0 0 0 23 2z" fill="#34a853"/>
                <circle cx="35.500" cy="35" r="14" fill="#fff"/>
                <circle cx="35.500" cy="35" r="11" fill="#3a7ee8"/>
            </svg>
        </div>
        <div class="dock-item">
            <svg class="icon-tall" viewBox="0 0 71 76">
                <path d="M6 68h16v8l-8-4-8 4z" fill="#d62f2a"/>
                <rect width="69" height="70" rx="12" fill="#a44848"/>
                <rect x=".8" y=".8" width="67.400" height="68.400" rx="12" fill="none" stroke="#7a3030" stroke-width="1.600"/>
                <text x="34.500" y="47" class="dict-label">Aa</text>
            </svg>
        </div>
        <div class="dock-item">
            <svg class="icon-preview" viewBox="0 0 75 76">
                <rect width="71" height="70" rx="16" fill="#f3f3f1"/>
                <path d="M5 14a9 9 0 0 1 9-9h43a9 9 0 0 1 9 9v26H5z" fill="url(#g-sky)"/>
                <rect x="5" y="40" width="61" height="11" fill="#2a4d8c"/>
                <path d="M5 47c10-2 22 4 40 2h21v12H5z" fill="#c9dbe5"/>
                <path d="M5 44l11 2 6 5-17 1zM9 64l6-6 20 3 3 4z" fill="#5a5349"/>
                <path d="M41 49h24l5 7c4 6 3 14-3 17-7 2-23 2-29 0-6-3-7-11-3-17z" fill="#d7dbdd" stroke="#5d6163" stroke-width="1.200"/>
                <rect x="37" y="34" width="31" height="16" rx="5" fill="#1c1c1d"/>
                <path d="M45 55l11-2 3 9-11 3zM42 67l8-3 3 5-9 1z" fill="#8d969e"/>
            </svg>
        </div>
        <div class="dock-item has-dot">
            <svg viewBox="0 0 71 70">
                <rect width="71" height="70" rx="16" fill="#fff"/>
                <path d="M47 12 32 28 18 22l-8 6 12 10-12 9 8 6 14-6 15 13V47L35 37l12-10z" fill="#0a72c0"/>
                <path d="M47 12l13 6v36l-13 6z" fill="#1f9cf0"/>
            </svg>
        </div>
        <div class="dock-separator"></div>
        <div class="dock-item">
            <svg class="thumb-messages" viewBox="0 0 82 62">
                <rect width="82" height="46" fill="#1d1e20"/>
                <rect width="17" height="46" fill="#3a3d3f"/>
                <rect y="5" width="17" height="3.500" fill="#5aae3c"/>
                <path d="M3 12h11M3 16h11M3 20h11M3 24h11M3 28h11M3 32h11M3 36h11" stroke="#85898b" stroke-width="1.200"/>
                <rect x="20" y="25" width="16" height="14" fill="#a89880"/>
                <rect x="22" y="28" width="12" height="7" fill="#53585a"/>
                <path d="M78 4h3M68 11h13M72 15h9M76 18h5M70 22h11" stroke="#1f7ce0" stroke-width="2"/>
                <rect x="54" y="36" width="26" height="26" rx="6" fill="#35d455"/>
                <ellipse cx="67" cy="48" rx="9" ry="8" fill="#eef5ee"/>
            </svg>
        </div>
        <div class="dock-item">
            <svg class="thumb-settings" viewBox="0 0 75 82">
                <rect width="75" height="82" fill="#2f3436"/>
                <rect width="22" height="82" fill="#3b4042"/>
                <rect y="62" width="22" height="3.500" fill="#5aae3c"/>
                <path d="M3 8h16M3 14h16M3 20h16M3 26h16M3 32h16M3 38h16M3 44h16M3 50h16M3 56h16M3 70h16M3 76h16" stroke="#84898b" stroke-width="1.200"/>
                <path d="M26 7h20M26 14h44M26 20h44M26 30h44M26 36h44M26 42h30M26 48h40M26 62h20M26 70h20" stroke="#70767a" stroke-width="1.200"/>
                <rect x="50" y="54" width="25" height="26" rx="6" fill="#b3b5b6"/>
                <circle cx="62.500" cy="67" r="10" fill="#4a4a4c"/>
                <circle cx="62.500" cy="67" r="5.500" fill="none" stroke="#a9a9ab" stroke-width="1.600"/>
            </svg>
        </div>
        <div class="dock-item">
            <svg class="icon-trash" viewBox="0 0 63 81">
                <path d="M3 15c4-8 8-2 10-8 3 4 5 3 8-5 2 7 6 8 11-2 2 8 7 7 11 0 1 7 6 8 9 3 2 4 5 6 8 12-8 10-48 10-57 0z" fill="#dfe2e2"/>
                <path d="M16 14l10-5 4 11-12 1zM36 8l8 3-2 11-9 1z" fill="#4e5254"/>
                <circle cx="31" cy="13" r="3" fill="#3f8fd6"/>
                <path d="M44 11l5 2-1 6-5-1z" fill="#d9534a"/>
                <path d="M1 18c14 8 47 8 61 0l-7 55c-2 10-45 10-47 0z" fill="url(#g-trash)"/>
            </svg>
        </div>
    </footer>

</body>
</html>
```

FILE: styles.css
```css
* {
    box-sizing: border-box;
}

body {
    margin: 0;
    width: 2880px;
    height: 1800px;
    overflow: hidden;
    background-color: #006b63;
    font-family: Inter, "Liberation Sans", sans-serif;
    display: flex;
    flex-direction: column;
}

.svg-defs {
    position: absolute;
    width: 0;
    height: 0;
}

/* Menu bar */
.menu-bar {
    height: 50px;
    flex-shrink: 0;
    position: relative;
    z-index: 2;
    background-color: #006b63;
    color: #eef5f3;
    font-size: 25.5px;
    display: flex;
    align-items: center;
    justify-content: space-between;
    padding: 0 38px 3px 40px;
}

.menu-left {
    display: flex;
    align-items: center;
    gap: 41.5px;
}

.apple-logo {
    width: 27px;
    height: 32px;
    margin-right: -1px;
}

.menu-app {
    font-size: 26px;
    font-weight: 700;
}

.menu-right {
    display: flex;
    align-items: center;
    gap: 38px;
}

.status-icon {
    display: block;
}

.status-input {
    margin-left: 4px;
}

.status-control {
    margin-left: -3px;
}

.siri {
    width: 28px;
    height: 32px;
    margin-left: -8px;
    border-radius: 50%;
    background: radial-gradient(circle at 55% 50%, #9ff 0, #37b6e6 22%, #7a3fd0 50%, #e03070 72%, #222 100%);
}

.menu-clock {
    margin-left: -5px;
    font-size: 26px;
}

/* Browser window */
.window {
    height: 1583px;
    flex-shrink: 0;
    display: flex;
    flex-direction: column;
    background-color: #202124;
    border-radius: 20px;
    border-top: 1px solid #77787a;
    outline: 1px solid #0a0a0a;
    overflow: hidden;
    box-shadow: 0 50px 120px -10px rgba(0, 0, 0, 0.6);
}

.tab-strip {
    height: 83px;
    flex-shrink: 0;
    display: flex;
    align-items: flex-end;
    position: relative;
    padding-left: 182px;
    color: #fff;
    font-size: 23.8px;
}

.traffic-lights {
    position: absolute;
    left: 42px;
    top: 30px;
    display: flex;
    gap: 16px;
}

.light {
    width: 24px;
    height: 24px;
    border-radius: 50%;
}

.light-red { background-color: #ff5f57; }
.light-yellow { background-color: #febc2e; }
.light-green { background-color: #28c840; }

.tab {
    width: 478px;
    height: 68px;
    flex-shrink: 0;
    position: relative;
    display: flex;
    align-items: center;
    padding: 0 0 0 28px;
}

.tab-sep::after {
    content: "";
    position: absolute;
    right: -6px;
    top: 15px;
    width: 2px;
    height: 40px;
    background-color: #5f6063;
}

.tab-active::before {
    content: "";
    position: absolute;
    top: 0;
    bottom: 0;
    left: 4px;
    right: -6px;
    background-color: #35363a;
    border-radius: 16px 16px 0 0;
}

/* Concave corners where the active tab meets the toolbar */
.tab-active::after {
    content: "";
    position: absolute;
    left: -12px;
    right: -22px;
    bottom: 0;
    height: 16px;
    background:
        radial-gradient(circle at 0 0, transparent 15.5px, #35363a 16px) left / 16px 16px no-repeat,
        radial-gradient(circle at 100% 0, transparent 15.5px, #35363a 16px) right / 16px 16px no-repeat;
}

.tab-active > * {
    position: relative;
}

.favicon {
    width: 32px;
    height: 32px;
    flex-shrink: 0;
}

.tab-active .favicon {
    width: 30px;
    height: 30px;
}

.tab-title {
    width: 350px;
    margin-left: 17px;
    margin-bottom: 2px;
    white-space: nowrap;
    overflow: hidden;
    -webkit-mask-image: linear-gradient(to right, #000 310px, transparent 350px);
    mask-image: linear-gradient(to right, #000 310px, transparent 350px);
}

.tab-active .tab-title {
    margin-left: 19px;
}

.tab-close {
    width: 17px;
    height: 17px;
    margin-left: 16px;
    flex-shrink: 0;
}

.new-tab {
    margin: 21px 0 21px 37px;
    flex-shrink: 0;
}

.tab-menu {
    margin: 28px 0 28px 192px;
    flex-shrink: 0;
}

.toolbar {
    height: 72px;
    flex-shrink: 0;
    background-color: #35363a;
    display: flex;
    align-items: center;
    padding: 0 0 0 30px;
}

.nav-icon {
    margin-right: 36px;
    flex-shrink: 0;
}

.omnibox {
    width: 2384px;
    height: 56px;
    margin-left: -6px;
    border-radius: 28px;
    background-color: #202124;
    display: flex;
    align-items: center;
    padding: 0 21px 0 28px;
    flex-shrink: 0;
}

.lock {
    flex-shrink: 0;
}

.url {
    margin-left: 22px;
    font-size: 27.85px;
    color: #9aa0a6;
    flex-grow: 1;
}

.url-host {
    color: #fff;
}

.omni-icon {
    margin-left: 37px;
    flex-shrink: 0;
}

.toolbar-actions {
    display: flex;
    align-items: center;
    gap: 34px;
    padding-left: 30px;
}

.avatar {
    width: 44px;
    height: 44px;
    margin: 0 4px 0 -6px;
    border-radius: 50%;
    background-color: #7e57c2;
    color: #fff;
    font-size: 24px;
    display: flex;
    align-items: center;
    justify-content: center;
}

.bookmarks {
    height: 66px;
    flex-shrink: 0;
    background-color: #35363a;
    border-bottom: 2px solid #4b4c50;
    display: flex;
    align-items: center;
    gap: 36px;
    padding: 0 0 10px 29px;
    color: #f1f3f4;
    font-size: 24px;
}

.bookmark {
    display: flex;
    align-items: center;
    gap: 17px;
}

.bookmark:last-child {
    margin-left: -5px;
}

/* Contact section of the page */
.page {
    flex-grow: 1;
    background-color: #829f82;
    box-shadow: inset 0 -3px 0 #a8bca6;
    display: flex;
    flex-direction: column;
    align-items: center;
    padding-top: 131px;
}

h1 {
    margin: 0 0 152px;
    color: #fff;
    font-family: "Liberation Serif", serif;
    font-size: 96px;
    line-height: 110px;
    font-weight: 700;
}

.contact-form {
    display: flex;
    flex-direction: column;
    align-items: center;
    gap: 60px;
}

input,
textarea,
button {
    border: none;
    border-radius: 0;
    outline: none;
    display: block;
}

input {
    width: 840px;
    height: 79px;
    padding: 0 24px;
    background-color: #fff;
    font-family: "Liberation Sans", Arial, sans-serif;
    font-size: 26.67px;
}

.message-box {
    position: relative;
}

textarea {
    width: 560px;
    height: 350px;
    padding: 23px 20px;
    background-color: #fff;
    font-family: "Liberation Mono", monospace;
    font-size: 26.67px;
    resize: none;
}

.resize-grip {
    position: absolute;
    right: 1px;
    bottom: 1px;
}

::placeholder {
    color: #757575;
}

button {
    width: 280px;
    height: 71px;
    margin-top: 50px;
    background-color: #efefef;
    color: #000;
    font-family: "Liberation Sans", Arial, sans-serif;
    font-size: 26.67px;
}

/* Dock */
.dock {
    width: 2731px;
    height: 110px;
    margin: 47px 0 0 75px;
    flex-shrink: 0;
    background-color: #155d5a;
    border: 1px solid #0d4744;
    box-shadow: inset 0 2px 0 #2f7370;
    border-radius: 36px;
    display: flex;
    gap: 20px;
    padding: 16px 0 0 15px;
    position: relative;
}

.dock-item {
    width: 71px;
    height: 70px;
    flex-shrink: 0;
    position: relative;
}

.dock-item svg {
    display: block;
    width: 71px;
    height: 70px;
    overflow: visible;
}

/* Icons that stick out of the regular square */
.dock-item .icon-numbers {
    width: 76px;
    height: 78px;
    margin: -6px 0 0 -4px;
}

.dock-item .icon-keynote {
    height: 80px;
    margin-top: -3px;
}

.dock-item .icon-pages {
    height: 80px;
    margin: -6px 0 0 -2px;
}

.dock-item .icon-tall {
    height: 76px;
}

.dock-item .icon-preview {
    width: 75px;
    height: 76px;
}

.dock-item .thumb-messages {
    width: 82px;
    height: 62px;
    margin: 12px 0 0 -4px;
}

.dock-item .thumb-settings {
    width: 75px;
    height: 82px;
    margin-top: -6px;
}

.dock-item .icon-trash {
    width: 63px;
    height: 81px;
    margin: -7px 0 0 6px;
}

.has-dot::after {
    content: "";
    position: absolute;
    left: 32px;
    top: 81px;
    width: 7px;
    height: 7px;
    border-radius: 50%;
    background-color: #7fdcd0;
}

.dock-badge {
    position: absolute;
    top: -9px;
    right: -9px;
    width: 34px;
    height: 34px;
    border-radius: 50%;
    background-color: #f23f32;
    color: #fff;
    font-size: 20px;
    display: flex;
    align-items: center;
    justify-content: center;
}

.dock-separator {
    width: 20px;
    height: 82px;
    margin-top: -2px;
    flex-shrink: 0;
    background: linear-gradient(#5f9b97, #5f9b97) center / 2px 100% no-repeat;
}

/* Text inside dock icons */
.cal-month {
    font-size: 17px;
    font-weight: 600;
    fill: #fff;
    text-anchor: middle;
}

.cal-day {
    font-size: 44px;
    font-weight: 300;
    fill: #2b2b2b;
    text-anchor: middle;
}

.tv-label {
    font-size: 34px;
    fill: #f2f2f2;
}

.kn-label {
    font-size: 4px;
    font-weight: 700;
    fill: #444;
}

.pg-label {
    font-size: 11px;
    fill: #fff;
}

.dict-label {
    font-family: "Liberation Serif", serif;
    font-size: 38px;
    fill: #f3e9e4;
    text-anchor: middle;
}
```
